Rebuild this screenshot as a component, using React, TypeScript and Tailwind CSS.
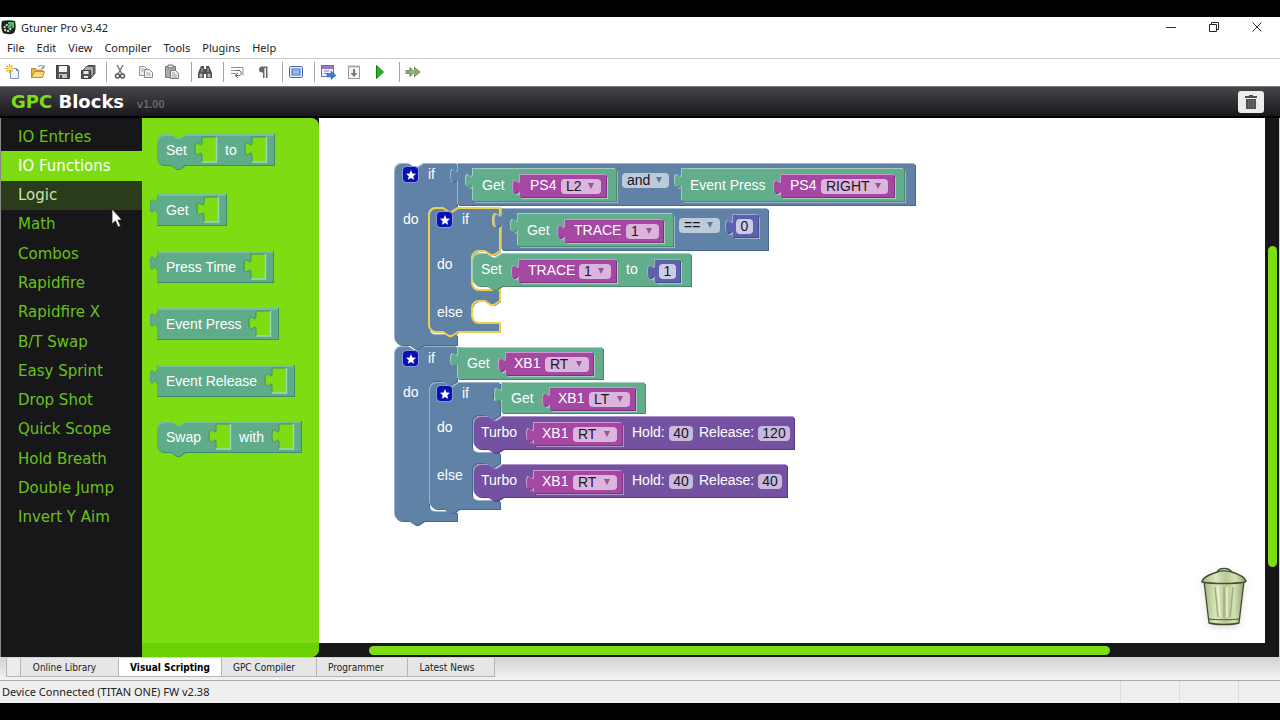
import type { ReactNode } from "react";
import { clsx } from "clsx";

const categories = [
  "IO Entries",
  "IO Functions",
  "Logic",
  "Math",
  "Combos",
  "Rapidfire",
  "Rapidfire X",
  "B/T Swap",
  "Easy Sprint",
  "Drop Shot",
  "Quick Scope",
  "Hold Breath",
  "Double Jump",
  "Invert Y Aim",
];

const menus = ["File", "Edit", "View", "Compiler", "Tools", "Plugins", "Help"];

const palette = {
  logic: { fill: "#5f82a6", light: "#9db4cb", dark: "#46688c" },
  io: { fill: "#62ad8b", light: "#a3cfbb", dark: "#478a6b" },
  entry: { fill: "#a548a3", light: "#cf98cd", dark: "#7d3180" },
  math: { fill: "#5c62ad", light: "#a3a7d4", dark: "#434a8e" },
  combo: { fill: "#7451a1", light: "#ac97c8", dark: "#573a82" },
};

type Kind = keyof typeof palette;

// ---------- block outlines ----------

const TAB_DOWN = "v5c0,9,-7,-7,-7,7s7,-2,7,7";
const TAB_UP = "c0,-9,-7,7,-7,-7s7,2,7,-7";
const NOTCH = "l6,4h3l6,-4";
const NOTCH_BACK = "l-6,4h-3l-6,-4";

function valuePath(x: number, y: number, w: number, h: number) {
  return `M${x},${y}h${w}v${h}h${-w}V${y + 19}${TAB_UP}z`;
}

function statementPath(x: number, y: number, w: number, h: number) {
  return `M${x},${y + 7}a7,7,0,0,1,7,-7h7${NOTCH}H${x + w}v${h}H${x + 29}${NOTCH_BACK}h-7a7,7,0,0,1,-7,-7z`;
}

// Left pointing mouth that holds a stack of statements.
function mouth(right: number, top: number, bottom: number) {
  return `V${top}${NOTCH_BACK}h-6a7,7,0,0,0,-7,7V${bottom - 7}a7,7,0,0,0,7,7H${right}`;
}

function ifPath(x: number, y: number, right: number, bottom: number, mouths: [number, number][]) {
  const inner = mouths.map(([top, end]) => mouth(right, top, end)).join("");
  return `M${x},${y + 7}a7,7,0,0,1,7,-7h7${NOTCH}H${right}${TAB_DOWN}${inner}V${bottom}H${x + 29}${NOTCH_BACK}h-7a7,7,0,0,1,-7,-7z`;
}

type BlockShape = { kind: Kind; d: string; selected?: boolean; socket?: Kind };

const shapes: BlockShape[] = [
  { kind: "logic", d: ifPath(395, 347, 457, 521, [[381, 512]]) },
  { kind: "logic", d: ifPath(395, 164, 457, 345, [[207, 335]]) },
  { kind: "logic", d: valuePath(458, 164, 457, 41) },
  { kind: "io", socket: "logic", d: valuePath(473, 169, 143, 32) },
  { kind: "entry", socket: "io", d: valuePath(520, 175, 86, 22) },
  { kind: "io", socket: "logic", d: valuePath(682, 169, 222, 32) },
  { kind: "entry", socket: "io", d: valuePath(781, 175, 113, 22) },
  { kind: "logic", selected: true, d: ifPath(429, 208, 500, 332, [[251, 290], [301, 323]]) },
  { kind: "logic", d: valuePath(502, 209, 266, 41) },
  { kind: "io", socket: "logic", d: valuePath(518, 214, 155, 32) },
  { kind: "entry", socket: "io", d: valuePath(565, 220, 98, 22) },
  { kind: "math", socket: "logic", d: valuePath(733, 215, 25, 22) },
  { kind: "io", d: statementPath(473, 254, 218, 32) },
  { kind: "entry", socket: "io", d: valuePath(519, 260, 97, 22) },
  { kind: "math", socket: "io", d: valuePath(655, 260, 25, 22) },
  { kind: "io", d: valuePath(458, 348, 145, 31) },
  { kind: "entry", socket: "io", d: valuePath(506, 353, 87, 22) },
  { kind: "logic", d: ifPath(430, 383, 500, 509, [[415, 453], [463, 501]]) },
  { kind: "io", d: valuePath(502, 383, 143, 30) },
  { kind: "entry", socket: "io", d: valuePath(550, 388, 85, 22) },
  { kind: "combo", d: statementPath(474, 417, 320, 32) },
  { kind: "entry", socket: "combo", d: valuePath(534, 423, 88, 22) },
  { kind: "combo", d: statementPath(474, 465, 313, 32) },
  { kind: "entry", socket: "combo", d: valuePath(534, 471, 88, 22) },
];

function Shape({ kind, d, selected, socket }: BlockShape) {
  const { fill, light, dark } = palette[kind];
  return (
    <g strokeLinejoin="round">
      {socket && <path d={d} fill={palette[socket].light} transform="translate(2,2)" />}
      <path d={d} fill={dark} transform="translate(1,1)" />
      <path d={d} fill={light} transform="translate(-1,-1)" />
      <path d={d} fill={fill} stroke={selected ? "#ecd04b" : "none"} strokeWidth="2" />
    </g>
  );
}

// x is the left edge, y the vertical centre
const labels: [string, number, number][] = [
  ["if", 428, 174],
  ["Get", 482, 185],
  ["PS4", 530, 185],
  ["Event Press", 690, 185],
  ["PS4", 790, 185],
  ["do", 403, 219],
  ["if", 462, 219],
  ["Get", 527, 230],
  ["TRACE", 574, 230],
  ["do", 437, 264],
  ["Set", 481, 269],
  ["TRACE", 528, 270],
  ["to", 626, 269],
  ["else", 437, 312],
  ["if", 428, 358],
  ["Get", 467, 363],
  ["XB1", 514, 363],
  ["do", 403, 392],
  ["if", 462, 393],
  ["Get", 511, 398],
  ["XB1", 558, 398],
  ["do", 437, 427],
  ["Turbo", 481, 432],
  ["XB1", 542, 433],
  ["Hold:", 632, 432],
  ["Release:", 699, 432],
  ["else", 437, 475],
  ["Turbo", 481, 480],
  ["XB1", 542, 481],
  ["Hold:", 632, 480],
  ["Release:", 699, 480],
];

type Choice = { name: string; value: string; x: number; y: number; w: number; kind: Kind };

const choices: Choice[] = [
  { name: "First button", value: "L2", x: 561, y: 186, w: 40, kind: "entry" },
  { name: "Logic operator", value: "and", x: 622, y: 180, w: 47, kind: "logic" },
  { name: "Second button", value: "RIGHT", x: 821, y: 186, w: 67, kind: "entry" },
  { name: "Compared trace", value: "1", x: 626, y: 231, w: 33, kind: "entry" },
  { name: "Comparison", value: "==", x: 679, y: 225, w: 41, kind: "logic" },
  { name: "Assigned trace", value: "1", x: 579, y: 271, w: 32, kind: "entry" },
  { name: "Outer trigger", value: "RT", x: 545, y: 364, w: 44, kind: "entry" },
  { name: "Inner trigger", value: "LT", x: 589, y: 399, w: 41, kind: "entry" },
  { name: "Turbo button", value: "RT", x: 573, y: 434, w: 44, kind: "entry" },
  { name: "Else turbo button", value: "RT", x: 573, y: 482, w: 44, kind: "entry" },
];

const numbers: Choice[] = [
  { name: "Compared value", value: "0", x: 736, y: 226, w: 17, kind: "math" },
  { name: "Assigned value", value: "1", x: 659, y: 271, w: 17, kind: "math" },
  { name: "Hold", value: "40", x: 669, y: 433, w: 24, kind: "combo" },
  { name: "Release", value: "120", x: 758, y: 433, w: 32, kind: "combo" },
  { name: "Else hold", value: "40", x: 669, y: 481, w: 24, kind: "combo" },
  { name: "Else release", value: "40", x: 758, y: 481, w: 24, kind: "combo" },
];

const mutators = [
  [403, 167],
  [437, 212],
  [403, 351],
  [437, 386],
];

// Origin of the block drawing inside the workspace.
const ORIGIN = { x: 319, y: 118 };

function place(x: number, y: number) {
  return { left: x - ORIGIN.x, top: y - ORIGIN.y };
}

function Workspace() {
  return (
    <section aria-label="Workspace" className="relative min-h-[520px] min-w-0 flex-1 overflow-hidden bg-white text-sm leading-4">
      <svg className="absolute left-0 top-0" width="620" height="420" viewBox="319 118 620 420" aria-hidden="true">
        {shapes.map((shape) => (
          <Shape key={shape.d} {...shape} />
        ))}
      </svg>

      {labels.map(([text, x, y]) => (
        <span key={`${x}-${y}`} className="absolute whitespace-nowrap text-white" style={place(x, y - 8)}>
          {text}
        </span>
      ))}

      {mutators.map(([x, y]) => (
        <button
          key={`${x}-${y}`}
          aria-label="Edit block"
          className="absolute flex h-[15px] w-[15px] items-center justify-center rounded-[3px] bg-[#0a10b4] outline outline-[#8397d6]"
          style={place(x, y)}
        >
          <svg width="10" height="10" viewBox="0 0 10 10" fill="#fff">
            <path d="M5 0 6.4 3.4 10 3.8 7.3 6.2 8.1 9.8 5 7.9 1.9 9.8 2.7 6.2 0 3.8 3.6 3.4z" />
          </svg>
        </button>
      ))}

      {choices.map(({ name, value, x, y, w, kind }) => (
        <div key={name} className="absolute h-[15px]" style={{ ...place(x, y - 7), width: w }}>
          <select
            aria-label={name}
            defaultValue={value}
            className={clsx(
              "block h-full w-full appearance-none rounded pb-px pl-[5px] leading-[14px] text-[#1c1420] outline-none",
              kind === "logic" ? "bg-[#bccbdc]" : "bg-[#dcb5dc]"
            )}
          >
            <option>{value}</option>
          </select>
          <svg className="pointer-events-none absolute right-[7px] top-1" width="6" height="6" viewBox="0 0 6 6" aria-hidden="true">
            <path d="M0 0h6L3 6z" fill={kind === "logic" ? "#5b7896" : "#96519a"} />
          </svg>
        </div>
      ))}

      {numbers.map(({ name, value, x, y, w, kind }) => (
        <input
          key={name}
          aria-label={name}
          defaultValue={value}
          className={clsx(
            "absolute h-[15px] rounded text-center leading-[15px] text-[#15151c] outline-none",
            kind === "math" ? "bg-[#cccce8]" : "bg-[#c8b9dd]"
          )}
          style={{ ...place(x, y - 7), width: w }}
        />
      ))}

      <TrashCan />
    </section>
  );
}

function TrashCan() {
  return (
    <svg className="absolute bottom-4 right-4 drop-shadow-md" width="50" height="62" viewBox="0 0 50 62" aria-label="Trash">
      <defs>
        <linearGradient id="can" x1="0" x2="1">
          <stop offset="0" stopColor="#a2b879" />
          <stop offset=".3" stopColor="#dce6c0" />
          <stop offset=".55" stopColor="#b9ca94" />
          <stop offset=".75" stopColor="#d5e0b7" />
          <stop offset="1" stopColor="#91a86b" />
        </linearGradient>
      </defs>
      <path d="M18 8c1-6 13-6 15 0" fill="#e8efd8" stroke="#4a523a" strokeWidth="1.5" />
      <path d="M5 16h40l-5 42c-8 2-22 2-30 0z" fill="url(#can)" stroke="#424a33" strokeWidth="1.3" />
      <path d="M16 22l3 30M25 22v31M34 22l-3 30" fill="none" stroke="#9db07a" strokeWidth="1.5" />
      <path d="M19 22l2 30M28 22v30" fill="none" stroke="#edf3d9" strokeWidth="1.5" />
      <path d="M10 54c8 1 22 1 30 0" fill="none" stroke="#4b5439" />
      <path d="M3 16c1-4 9-7 15-9 5-2 11-1 15 0 6 2 13 5 14 9l-1 1c-10 2-33 2-43 0z" fill="url(#can)" stroke="#424a33" strokeWidth="1.4" />
    </svg>
  );
}

// ---------- flyout ----------

function Slot() {
  return (
    <svg className="shrink-0 overflow-visible" width="22" height="25" viewBox="0 0 22 25" aria-hidden="true">
      <path d={`M7,0${TAB_DOWN}V25H21V0z`} fill="#7ddc12" />
      <path d={`M7,25V19${TAB_UP}V0H21`} fill="none" stroke="#478a6b" />
      <path d="M7 25H21.5V0" fill="none" stroke="#9bd8b4" strokeWidth="1.5" />
    </svg>
  );
}

function FlyoutBlock({ statement, children }: { statement?: boolean; children: ReactNode }) {
  return (
    <button
      className={clsx(
        "relative flex h-8 items-center gap-2 whitespace-nowrap border-b border-r border-[#3f8a6c] bg-[#5fac8b] pl-[9px] pr-[7px] text-sm text-white shadow-[inset_0_2px_0_#78bf9d]",
        statement && "rounded-l-lg"
      )}
    >
      {statement ? (
        <>
          <svg className="absolute left-[13px] top-0" width="17" height="6" viewBox="0 0 17 6" aria-hidden="true">
            <path d="M0 0h17L10 5H7z" fill="#78bf9d" />
            <path d="M1 0h15L10 4H7z" fill="#7ddc12" />
          </svg>
          <svg className="absolute left-[13px] top-[31px]" width="17" height="5" viewBox="0 0 17 5" aria-hidden="true">
            <path d="M0 0 7 5h3l7-5z" fill="#3f8a6c" />
            <path d="M1 0 7 4h3l5-4z" fill="#5fac8b" />
          </svg>
        </>
      ) : (
        <svg className="absolute -left-[7px] top-0" width="8" height="20" viewBox="0 0 8 20" aria-hidden="true">
          <path d={`M7,0${TAB_DOWN}h1V0z`} fill="#5fac8b" />
          <path d={`M7,19${TAB_UP}`} fill="none" stroke="#4d9a79" />
        </svg>
      )}
      {children}
    </button>
  );
}

function Flyout() {
  return (
    <div className="flex w-[177px] shrink-0 flex-col justify-between rounded-r-lg bg-[#7ddc12]">
      <div className="flex flex-col items-start gap-6 pl-[15px] pt-4 text-left">
        <FlyoutBlock statement>
          Set <Slot /> to <Slot />
        </FlyoutBlock>
        <div className="flex flex-col items-start gap-[25px] pt-1">
          {["Get", "Press Time", "Event Press", "Event Release"].map((name) => (
            <FlyoutBlock key={name}>
              {name} <Slot />
            </FlyoutBlock>
          ))}
        </div>
        <FlyoutBlock statement>
          Swap <Slot /> with <Slot />
        </FlyoutBlock>
      </div>
      <div className="h-[14px] rounded-br-lg bg-[#6bd104]" />
    </div>
  );
}

// ---------- toolbar ----------

function Icon({ children }: { children: ReactNode }) {
  return (
    <svg width="16" height="16" viewBox="0 0 16 16" fill="none" aria-hidden="true">
      {children}
    </svg>
  );
}

const toolGroups: { wide?: boolean; tools: [string, ReactNode][] }[] = [
  {
    tools: [
      [
        "New",
        <Icon>
          <path d="M5.5 4.5h6l2 2v8h-8z" fill="#f2f5fb" stroke="#8394b5" />
          <path d="M11.5 4.5v2h2" stroke="#6a7da3" />
          <path d="M4.5 0v9M0 4.5h9M1.5 1.5l6 6M7.5 1.5l-6 6" stroke="#e9ab1c" strokeWidth="1.2" />
          <circle cx="4.5" cy="4.5" r="2" fill="#ffe36b" />
        </Icon>,
      ],
      [
        "Open",
        <Icon>
          <path d="M1.5 13.5v-9h4l1 1.5h6v2" fill="#e8b447" stroke="#b98a35" />
          <path d="M1.5 13.5l3-6h10l-2 6z" fill="#ffd978" stroke="#b98a35" />
          <path d="M8 3c2-2 4-2 5 0M14 1v3h-3" stroke="#777" />
        </Icon>,
      ],
      [
        "Save",
        <Icon>
          <path d="M1.5 1.5h12l1 1v12h-13z" fill="#565656" stroke="#3e3e3e" />
          <path d="M4 2h8v6H4z" fill="#f4f4f4" />
          <path d="M4 10h8v4H4z" fill="#c4c4c4" />
          <path d="M5 11h2v3H5z" fill="#444" />
        </Icon>,
      ],
      [
        "Save all",
        <Icon>
          <path d="M4.5 5.5 8 1.5h7v8L11 14z" fill="#8b8b8b" stroke="#4b4b4b" />
          <path d="M3 6l3.5-3.5h7V10" fill="#aaa" stroke="#555" />
          <path d="M1.5 6.5h9v8h-9z" fill="#555" stroke="#3e3e3e" />
          <path d="M3.5 7h5v3h-5zM4 12h4v2H4z" fill="#e5e5e5" />
        </Icon>,
      ],
    ],
  },
  {
    wide: true,
    tools: [
      [
        "Cut",
        <Icon>
          <path d="M5 1l5 9M11 1l-5 9" stroke="#777" strokeWidth="1.5" />
          <circle cx="5.5" cy="12" r="2" stroke="#555" strokeWidth="1.5" />
          <circle cx="10.5" cy="12" r="2" stroke="#555" strokeWidth="1.5" />
        </Icon>,
      ],
      [
        "Copy",
        <Icon>
          <path d="M1.5 2.5h5l3 3v6h-8z" fill="#eee" stroke="#999" />
          <path d="M6.5 5.5h5l3 3v5h-8z" fill="#f4f4f4" stroke="#888" />
          <path d="M3 5h3M3 7h3M8 9h4M8 11h5" stroke="#aaa" />
        </Icon>,
      ],
      [
        "Paste",
        <Icon>
          <path d="M1.5 2.5h10v11h-10z" fill="#aaa" stroke="#777" />
          <path d="M4 1h5v3H4z" fill="#ddd" stroke="#777" />
          <path d="M6.5 6.5h5l3 3v5h-8z" fill="#f4f4f4" stroke="#777" />
          <path d="M8 9h3M8 11h5M8 13h5" stroke="#999" />
        </Icon>,
      ],
    ],
  },
  {
    tools: [
      [
        "Find",
        <Icon>
          <path d="M4 2h3v3h2V2h3l3 7v5H9v-4H7v4H1V9z" fill="#525252" />
          <path d="M3 10h2v3H3zM11 10h2v3h-2zM5 4v4M11 4v4" fill="#ccc" stroke="#aaa" />
        </Icon>,
      ],
    ],
  },
  {
    wide: true,
    tools: [
      [
        "Word wrap",
        <Icon>
          <path d="M2 3.5h12v8M2 6.5h9M2 9.5h5" stroke="#909090" />
          <path d="M7 6.5h3c3 0 3 5 0 5H7M9 9l-3 2.5 3 2.5" stroke="#666" />
        </Icon>,
      ],
      [
        "Show paragraph marks",
        <Icon>
          <path d="M12.5 2.5H7a3 3 0 0 0 0 6h1V14h1.5V4H11v10h1.5z" fill="#666" />
        </Icon>,
      ],
    ],
  },
  {
    tools: [
      [
        "Full screen",
        <Icon>
          <rect x="1.5" y="2.5" width="13" height="11" rx="1" fill="#dfe9fb" stroke="#4867b8" />
          <rect x="4" y="5" width="8" height="6" fill="#91b4ef" stroke="#4f75c5" />
        </Icon>,
      ],
    ],
  },
  {
    wide: true,
    tools: [
      [
        "Compile",
        <Icon>
          <rect x="1.5" y="1.5" width="12" height="11" fill="#f3eefb" stroke="#7767b4" />
          <path d="M2 2h11v3H2z" fill="#9c78c8" />
          <path d="M4 7h5M4 9.5h4" stroke="#8178b0" />
          <path d="M7 9.5h4V7l5 4.5-5 4V13H7z" fill="#3d7ed2" stroke="#285c9d" strokeWidth=".5" />
        </Icon>,
      ],
      [
        "Download",
        <Icon>
          <rect x="2.5" y="2.5" width="11" height="12" fill="#f5f5f5" stroke="#999" />
          <path d="M2 1.5h12v2H2z" fill="#aaa" />
          <path d="M7 5h2v4h2.5L8 13 4.5 9H7z" fill="#777" />
        </Icon>,
      ],
      [
        "Run",
        <Icon>
          <path d="M4.5 1.5l7 6.5-7 6.5z" fill="#24b324" stroke="#108010" />
        </Icon>,
      ],
    ],
  },
  {
    tools: [
      [
        "Continue",
        <Icon>
          <path d="M1 6.5h4v-3L9.5 8 5 12.5v-3H1z" fill="#8fb37a" stroke="#50733e" strokeWidth=".8" />
          <path d="M9.5 3.5 15 8l-5.500 4.500v-3L11 8 9.500 6.500z" fill="#8fb37a" stroke="#50733e" strokeWidth=".8" />
        </Icon>,
      ],
    ],
  },
];

function Toolbar() {
  return (
    <div role="toolbar" className="flex h-7 items-center border-t border-[#c9c9c9] bg-white pb-px">
      {toolGroups.map(({ wide, tools }, index) => (
        <div key={tools[0][0]} className="flex items-center">
          {index > 0 && <span className="ml-[6px] h-5 w-px bg-[#a5a5a5]" />}
          {tools.map(([name, icon]) => (
            <button
              key={name}
              aria-label={name}
              className={clsx("flex h-6 items-center justify-center", wide ? "w-[26px]" : "w-[25px]")}
            >
              {icon}
            </button>
          ))}
        </div>
      ))}
    </div>
  );
}

function TitleBar() {
  return (
    <header className="flex h-[21px] items-center justify-between bg-white">
      <div className="flex items-center gap-[5px] pl-px">
        <svg width="15" height="15" viewBox="0 0 15 15" aria-hidden="true">
          <path d="M1 1c4-1 9-1 13 0 1 4 1 9-1 12-4 2-8 1-11 0C0 9 0 5 1 1z" fill="#16241c" />
          <circle cx="6.5" cy="8" r="3" fill="none" stroke="#d7e4db" strokeWidth="2" strokeDasharray="2 1" />
          <path d="M7 3h5v5M12 3 7 8" fill="none" stroke="#4dbb68" strokeWidth="2" />
        </svg>
        <h1>Gtuner Pro v3.42</h1>
      </div>
      <div className="flex pb-px pr-px">
        <button aria-label="Minimize" className="flex w-[43px] justify-center">
          <svg width="10" height="10" viewBox="0 0 10 10" fill="none" stroke="#333">
            <path d="M0 5.5h10" />
          </svg>
        </button>
        <button aria-label="Restore" className="flex w-[43px] justify-center">
          <svg width="10" height="10" viewBox="0 0 10 10" fill="none" stroke="#222">
            <path d="M.5 2.5h7v7h-7zM2.5 2.5v-2h7v7h-2" />
          </svg>
        </button>
        <button aria-label="Close" className="flex w-[44px] justify-center">
          <svg width="10" height="10" viewBox="0 0 10 10" fill="none" stroke="#333">
            <path d="M.5.5l9 9M9.5.5l-9 9" />
          </svg>
        </button>
      </div>
    </header>
  );
}

function BottomTabs() {
  const tab = "h-[19px] border-b border-r border-[#b5b5b5] text-center";
  return (
    <nav className="flex h-6 items-start border-b border-[#ababab] bg-linear-to-b from-[#d2d2d2] to-[#f4f4f4] pl-[6px] pt-px font-['DejaVu_Sans_Condensed','DejaVu_Sans',sans-serif] text-[10px] leading-[19px]">
      <span className={clsx(tab, "w-[15px] border-l bg-[#ececec]")} />
      <button className={clsx(tab, "w-[98px] bg-[#e6e6e6] pr-[10px]")}>Online Library</button>
      <button className={clsx(tab, "w-[103px] bg-white font-bold text-black")}>Visual Scripting</button>
      <button className={clsx(tab, "w-[95px] bg-[#e6e6e6] pr-[10px]")}>GPC Compiler</button>
      <button className={clsx(tab, "w-[91px] bg-[#e6e6e6] pr-3")}>Programmer</button>
      <button className={clsx(tab, "w-[87px] bg-[#e6e6e6] pr-2")}>Latest News</button>
    </nav>
  );
}

export default function App() {
  return (
    <div className="flex min-h-screen flex-col bg-black py-[17px] font-['Noto_Sans',sans-serif] text-[11px] leading-4 text-[#222]">
      <TitleBar />
      <nav className="flex h-5 items-center gap-3 bg-white pl-[7px]">
        {menus.map((menu) => (
          <button key={menu}>{menu}</button>
        ))}
      </nav>
      <Toolbar />

      <div className="flex h-8 items-center justify-between border-b-2 border-t border-b-black border-t-[#77777b] bg-linear-to-b from-[#46464b] to-[#19191d] pl-[11px] pr-4">
        <div className="flex items-baseline gap-[13px]">
          <h2 className="font-['DejaVu_Sans',sans-serif] text-lg font-bold leading-6 text-white">
            <span className="text-[#7ddc12]">GPC</span> Blocks
          </h2>
          <span className="font-['Liberation_Sans',sans-serif] text-[11px] font-bold text-[#66666f]">v1.00</span>
        </div>
        <button aria-label="Delete all" className="flex h-[22px] w-[26px] items-center justify-center rounded-[3px] bg-[#ececec]">
          <svg width="12" height="14" viewBox="0 0 12 14" fill="#505050" aria-hidden="true">
            <path d="M4 0h4v1h4v2H0V1h4zM1 4h10v10H1z" />
            <path d="M3.5 5v8M6 5v8M8.5 5v8" stroke="#6f6f6f" />
          </svg>
        </button>
      </div>

      <main className="flex flex-1 border-l border-r border-l-[#8a8a8a] border-r-[#cfcfcf] bg-[#17171a] font-['Liberation_Sans',Arial,sans-serif]">
        <aside className="w-[141px] shrink-0 pt-1">
          <div className="flex h-[410px] flex-col font-['DejaVu_Sans',sans-serif] text-[15px]">
            {categories.map((name) => (
              <button
                key={name}
                className={clsx(
                  "flex-1 whitespace-nowrap pl-[17px] text-left",
                  name === "IO Functions" && "bg-[#7ddc12] text-white",
                  name === "Logic" && "bg-[#2a3c19] text-[#c9e6a5]",
                  name !== "IO Functions" && name !== "Logic" && "text-[#69c219]"
                )}
              >
                {name}
              </button>
            ))}
          </div>
        </aside>
        <Flyout />
        <div className="flex min-w-0 flex-1 flex-col">
          <Workspace />
          <div className="flex h-[14px] items-center pl-[50px] pr-[155px]">
            <div className="h-[9px] flex-1 rounded-full bg-[#7ddc12]" />
          </div>
        </div>
        <div className="flex w-[14px] shrink-0 flex-col items-center pt-32">
          <div className="h-[78%] w-[9px] rounded-full bg-[#7ddc12]" />
        </div>
      </main>

      <BottomTabs />
      <footer className="flex h-[22px] items-center justify-between bg-[#efefef] pl-[2px] leading-[22px]">
        <span>Device Connected (TITAN ONE) FW v2.38</span>
        <div className="flex h-full">
          <span className="w-[59px] border-l border-[#dcdcdc]" />
          <span className="w-[59px] border-l border-[#dcdcdc]" />
          <span className="w-[42px] border-l border-[#dcdcdc]" />
        </div>
      </footer>

      <svg className="pointer-events-none absolute left-[111px] top-[208px]" width="12" height="20" viewBox="0 0 12 20" aria-hidden="true">
        <path d="M1 1v15l3.5-3 2.5 6 2.5-1-2.5-6H11z" fill="#fff" stroke="#222" strokeWidth=".8" />
      </svg>
    </div>
  );
}
